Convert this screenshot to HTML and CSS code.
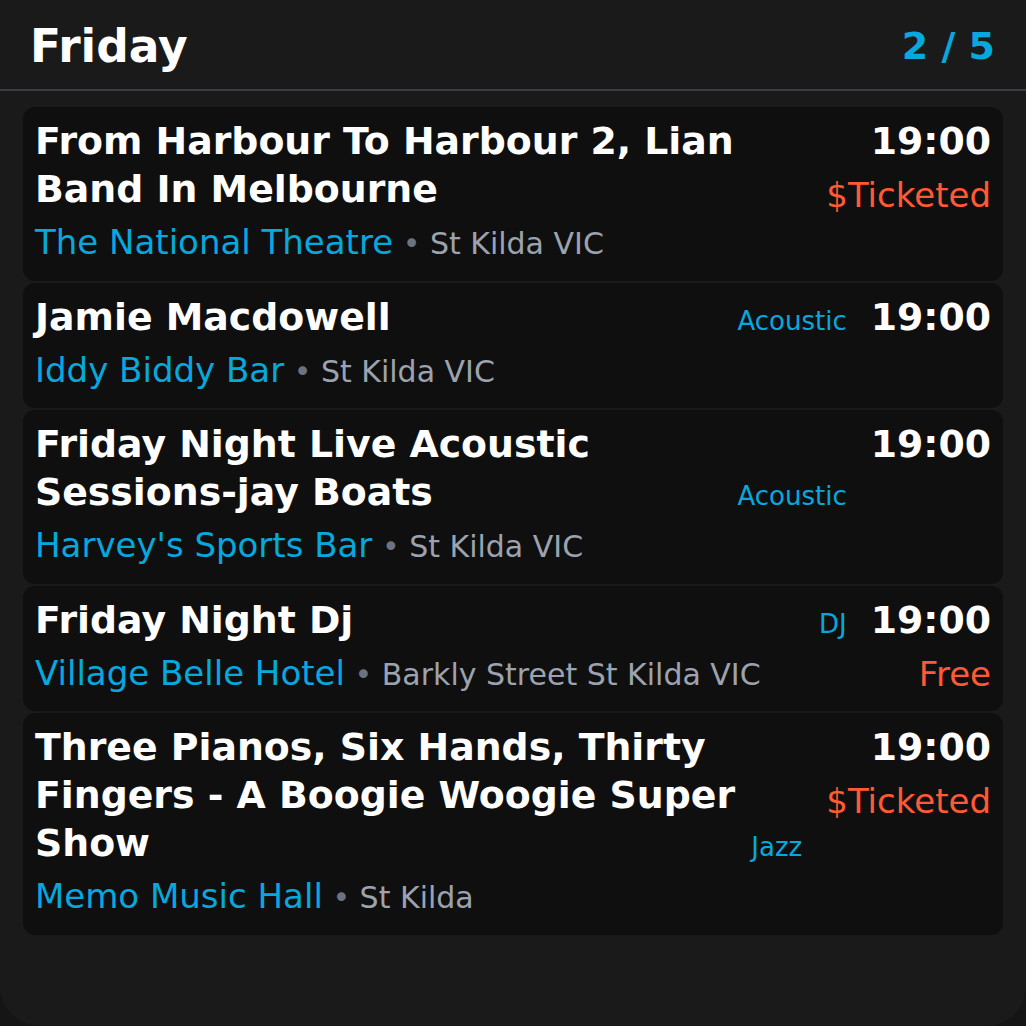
FILE: index.html
```html
<!DOCTYPE html>
<html lang="en">
<head>
<meta charset="utf-8">
<title>Friday</title>
<link rel="stylesheet" href="styles.css">
</head>
<body>
<div class="app">
  <header class="header">
    <h1 class="day">Friday</h1>
    <div class="counter">2 / 5</div>
  </header>
  <main class="list">
    <article class="card">
      <div class="main">
        <div class="title-row">
          <h2 class="title">From Harbour To Harbour 2, Lian Band In Melbourne</h2>
        </div>
        <div class="venue-line"><span class="venue">The National Theatre</span><span class="loc"> <span class="dot">•</span> St Kilda VIC</span></div>
      </div>
      <div class="side">
        <div class="time">19:00</div>
        <div class="price">$Ticketed</div>
      </div>
    </article>
    <article class="card">
      <div class="main">
        <div class="title-row">
          <h2 class="title">Jamie Macdowell</h2>
          <span class="genre">Acoustic</span>
        </div>
        <div class="venue-line"><span class="venue">Iddy Biddy Bar</span><span class="loc"> <span class="dot">•</span> St Kilda VIC</span></div>
      </div>
      <div class="side">
        <div class="time">19:00</div>
      </div>
    </article>
    <article class="card">
      <div class="main">
        <div class="title-row">
          <h2 class="title">Friday Night Live Acoustic Sessions-jay Boats</h2>
          <span class="genre">Acoustic</span>
        </div>
        <div class="venue-line"><span class="venue">Harvey's Sports Bar</span><span class="loc"> <span class="dot">•</span> St Kilda VIC</span></div>
      </div>
      <div class="side">
        <div class="time">19:00</div>
      </div>
    </article>
    <article class="card">
      <div class="main">
        <div class="title-row">
          <h2 class="title">Friday Night Dj</h2>
          <span class="genre">DJ</span>
        </div>
        <div class="venue-line"><span class="venue">Village Belle Hotel</span><span class="loc"> <span class="dot">•</span> Barkly Street St Kilda VIC</span></div>
      </div>
      <div class="side">
        <div class="time">19:00</div>
        <div class="price">Free</div>
      </div>
    </article>
    <article class="card">
      <div class="main">
        <div class="title-row">
          <h2 class="title">Three Pianos, Six Hands, Thirty Fingers - A Boogie Woogie Super Show</h2>
          <span class="genre">Jazz</span>
        </div>
        <div class="venue-line"><span class="venue">Memo Music Hall</span><span class="loc"> <span class="dot">•</span> St Kilda</span></div>
      </div>
      <div class="side">
        <div class="time">19:00</div>
        <div class="price">$Ticketed</div>
      </div>
    </article>
  </main>
</div>
</body>
</html>
```

FILE: styles.css
```css
html, body {
  margin: 0;
  padding: 0;
  background: #151515;
}

body {
  font-family: "DejaVu Sans", "Liberation Sans", sans-serif;
  color: #ffffff;
}

.app {
  min-height: 1026px;
  box-sizing: border-box;
  background: #1a1a1a;
  border-radius: 0 0 40px 40px;
  overflow: hidden;
}

.header {
  display: flex;
  align-items: center;
  justify-content: space-between;
  height: 91px;
  box-sizing: border-box;
  padding: 4px 31px 0 30px;
  border-bottom: 2px solid #393e46;
}

.day {
  margin: 0;
  font-size: 45.5px;
  line-height: 54px;
  font-weight: 700;
  color: #ffffff;
}

.counter {
  font-size: 38px;
  line-height: 45px;
  font-weight: 700;
  color: #06a8de;
}

.list {
  display: flex;
  flex-direction: column;
  gap: 2px;
  padding: 16px 23px 0 23px;
}

.card {
  display: flex;
  align-items: flex-start;
  gap: 24px;
  background: #0f0f0f;
  border-radius: 12px;
  padding: 10px 12px 14px 12px;
}

.main {
  flex: 1;
  min-width: 0;
}

.title-row {
  display: flex;
  align-items: last baseline;
  gap: 12px;
}

.title {
  flex: 1;
  margin: 0;
  font-size: 37.8px;
  line-height: 48px;
  font-weight: 700;
  color: #ffffff;
}

.genre {
  font-size: 26px;
  line-height: 34px;
  color: #06a8de;
  white-space: nowrap;
}

.venue-line {
  margin-top: 5px;
  font-size: 34px;
  line-height: 48.5px;
  white-space: nowrap;
}

.venue {
  color: #06a8de;
}

.loc {
  font-size: 30px;
  line-height: 1;
  color: #9ca3af;
}

.dot {
  color: #6b7280;
}

.side {
  display: flex;
  flex-direction: column;
  align-items: flex-end;
  text-align: right;
  white-space: nowrap;
}

.time {
  font-size: 37.8px;
  line-height: 48px;
  font-weight: 700;
  color: #ffffff;
}

.price {
  margin-top: 10px;
  font-size: 34px;
  line-height: 40px;
  color: #ff5a35;
}
```
